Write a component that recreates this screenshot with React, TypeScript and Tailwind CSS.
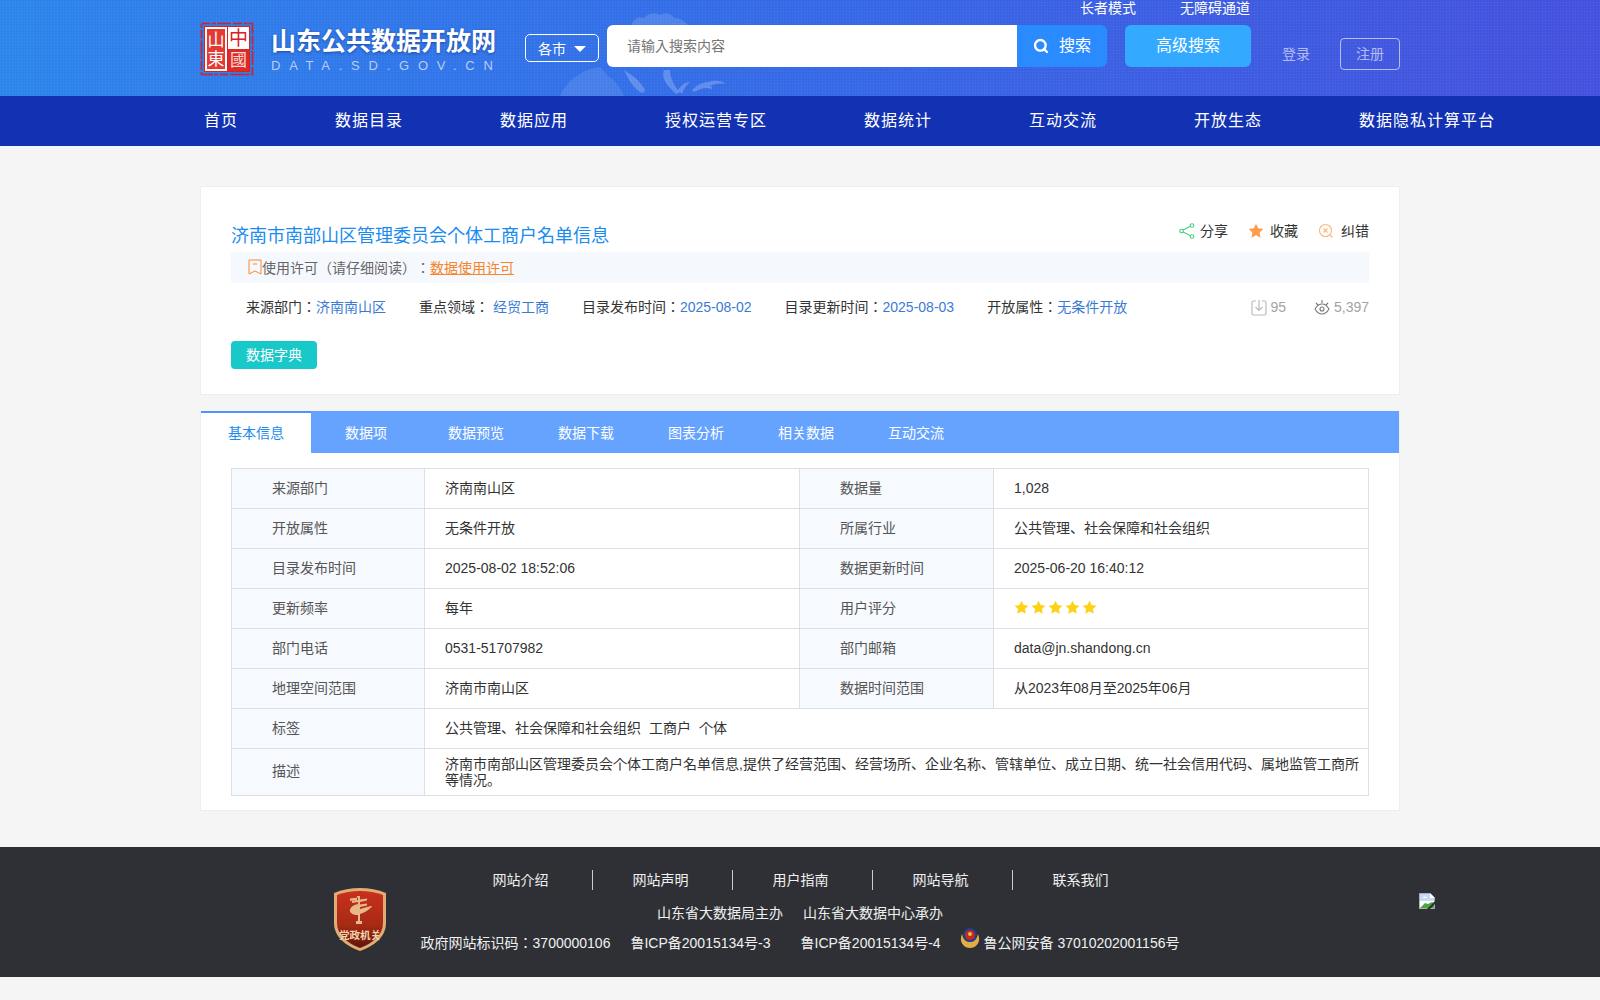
import { Search } from "lucide-react";

const FONT = `"Liberation Sans", "Noto Sans CJK JP", sans-serif`;

const navItems = ["首页", "数据目录", "数据应用", "授权运营专区", "数据统计", "互动交流", "开放生态", "数据隐私计算平台"];
const tabs = ["基本信息", "数据项", "数据预览", "数据下载", "图表分析", "相关数据", "互动交流"];
const footerLinks = ["网站介绍", "网站声明", "用户指南", "网站导航", "联系我们"];

function Seal() {
  return (
    <svg width="54" height="56" viewBox="0 0 54 56" className="shrink-0">
      <rect x="1.500" y="2.500" width="51" height="51" fill="none" stroke="#d8201f" strokeWidth="1.600" strokeDasharray="9 1.500 4 1 14 2" />
      <rect x="4" y="5" width="46" height="46" fill="#d8201f" />
      <rect x="5" y="6" width="22" height="44" fill="#fff" />
      <rect x="7" y="8" width="18" height="40" fill="#e33a34" />
      <rect x="28" y="6" width="21" height="22" fill="#fff" />
      <rect x="28" y="28" width="21" height="22" fill="#dd2a26" />
      <text x="16" y="25" textAnchor="middle" fontSize="17" fill="#fff" fontFamily={FONT}>山</text>
      <text x="16" y="44" textAnchor="middle" fontSize="17" fill="#fff" fontFamily={FONT}>東</text>
      <text x="38.500" y="24" textAnchor="middle" fontSize="19" fill="#d8201f" fontFamily={FONT}>中</text>
      <text x="38.500" y="45" textAnchor="middle" fontSize="17" fill="#f8dcd6" fontFamily={FONT}>國</text>
    </svg>
  );
}

function Clouds() {
  // faint map texture behind the search box
  return (
    <svg width="200" height="96" viewBox="0 0 200 96" className="absolute left-[560px] top-0" fill="#ffffff">
      <path opacity="0.14" d="M72 24c2-6 8-8 12-6 4-5 12-6 16-3 5-3 12-1 14 3 6 0 12 3 14 8l-6 2h-50z" />
      <path opacity="0.1" d="M0 96c4-10 12-18 20-22 6-4 12-6 20-7l8 9c6 4 12 10 16 20z" />
      <path opacity="0.22" d="M64 70l6 4c6 4 10 8 14 14 2 3 0 6-4 4-6-4-10-10-12-14zM104 70c-2 6 0 12 6 18l6 6 4-2c-6-6-10-14-10-22zM118 90c4-6 8-8 12-8-3 2-6 6-8 12zM132 90c6-6 12-8 16-8 6-2 14-2 18 2-6-1-12 0-16 2 4 2 2 4-2 2-6 0-10 2-14 4z" />
    </svg>
  );
}

function Badge() {
  return (
    <svg width="52" height="63" viewBox="0 0 52 63" className="shrink-0">
      <defs>
        <linearGradient id="shield" x1="0" y1="0" x2="0" y2="1">
          <stop offset="0" stopColor="#c9301d" />
          <stop offset="0.6" stopColor="#a72a15" />
          <stop offset="1" stopColor="#5e140c" />
        </linearGradient>
      </defs>
      <path d="M26 0c9 0 18 1.500 26 5v30c0 14-12 23-26 28C12 58 0 49 0 35V5C8 1.500 17 0 26 0z" fill="#e0ac74" />
      <path d="M26 3c8 0 16 1.500 23 4v28c0 12-10 20-23 25C13 55 3 47 3 35V7c7-2.500 15-4 23-4z" fill="url(#shield)" />
      <path d="M16 13l7-1V8h3v3.500l7-1v2l-7 1.500v2.500l7-1v2l-7 1.500v2l11-3c1.500 0 1 1-.5 2-3 3-7 5-10.500 6v7h2v3H22v-3h2v-6c-5 0-9-2-8-5.500 1-3 4-4.500 8-5.500v-2l-6 1v-2l6-1v-2.500l-8 1z" fill="#e8b888" />
      <text x="26" y="51" textAnchor="middle" fontSize="10.500" fontWeight="700" fill="#f3d3ab" fontFamily={FONT}>党政机关</text>
    </svg>
  );
}

function PoliceEmblem() {
  return (
    <svg width="20" height="22" viewBox="0 0 20 22" className="shrink-0">
      <path d="M2 7c-3 6 0 14 8 14s11-8 8-14c-1 4-3 8-8 8S3 11 2 7z" fill="#e0ae45" />
      <circle cx="10" cy="8" r="7" fill="#1d3f94" />
      <circle cx="10" cy="8" r="5" fill="#c8281e" />
      <circle cx="10" cy="7" r="2" fill="#e8bb3f" />
    </svg>
  );
}

function BrokenImage() {
  return (
    <svg width="16" height="16" viewBox="0 0 16 16" className="shrink-0">
      <path d="M0.500 0.500h11l4 4v11H0.500z" fill="#fff" stroke="#a9b1b8" />
      <path d="M1 1h10v4h4v3H1z" fill="#c6d8f4" />
      <path d="M3 5c2-2 4-2 5 0z" fill="#fff" />
      <path d="M1 15l5-5 3 1 4-2 2 1v5z" fill="#4ea53a" />
      <path d="M8 16l8-8v3l-5 5z" fill="#2e3035" />
    </svg>
  );
}

function Star({ color, size }: { color: string; size: number }) {
  return (
    <svg width={size} height={size} viewBox="0 0 24 24" className="shrink-0">
      <path d="M12 1l3.400 7 7.600 1-5.500 5.300 1.400 7.700L12 18.300 5.100 22l1.400-7.700L1 9l7.600-1z" fill={color} />
    </svg>
  );
}

function Meta({ label, value }: { label: string; value: string }) {
  return (
    <span className="whitespace-nowrap text-[#333]">
      {label}
      <span className="text-[#3b7bd6]">{value}</span>
    </span>
  );
}

const rows: [string, string, string, React.ReactNode][] = [
  ["来源部门", "济南南山区", "数据量", "1,028"],
  ["开放属性", "无条件开放", "所属行业", "公共管理、社会保障和社会组织"],
  ["目录发布时间", "2025-08-02 18:52:06", "数据更新时间", "2025-06-20 16:40:12"],
  [
    "更新频率",
    "每年",
    "用户评分",
    <span className="flex gap-[2px]" key="stars">
      {[0, 1, 2, 3, 4].map((i) => (
        <Star key={i} color="#ffd21a" size={15} />
      ))}
    </span>,
  ],
  ["部门电话", "0531-51707982", "部门邮箱", "data@jn.shandong.cn"],
  ["地理空间范围", "济南市南山区", "数据时间范围", "从2023年08月至2025年06月"],
];

const labelCell = "border border-[#dcdfe6] bg-[#f6f9fe] pb-[2px] pl-[40px] text-[#555] font-normal text-left";
const valueCell = "border border-[#dcdfe6] pb-[2px] pl-[20px] pr-2 text-[#333] text-left";

export default function App() {
  return (
    <div className="min-h-[1000px] bg-[#f5f5f5] text-sm [text-spacing-trim:space-all]" style={{ fontFamily: FONT }}>
      <header className="relative h-[96px] overflow-hidden bg-[linear-gradient(90deg,#2b84ec_0%,#3468e6_50%,#4350dd_100%)]">
        <div className="absolute inset-0 bg-[repeating-linear-gradient(0deg,rgba(255,255,255,0.03)_0_1px,transparent_1px_3px),repeating-linear-gradient(90deg,rgba(255,255,255,0.03)_0_1px,transparent_1px_3px)]" />
        <Clouds />
        <div className="relative mx-auto flex h-full w-[1200px] items-start">
          <div className="mt-[21px]">
            <Seal />
          </div>
          <div className="ml-[17px] mt-[25px] w-[236px]">
            <div className="whitespace-nowrap text-[25px] font-bold leading-[32px] text-white [text-shadow:0_1px_3px_rgba(0,0,50,0.4)]">山东公共数据开放网</div>
            <div className="mt-[1px] whitespace-nowrap text-[13px] leading-[16px] tracking-[8.750px] text-[#b6cdf6]">DATA.SD.GOV.CN</div>
          </div>
          <button className="ml-[18px] mt-[34px] flex h-[28px] w-[74px] items-center justify-center gap-[8px] rounded-[5px] border border-white pt-[2px] text-sm text-white">
            各市
            <span className="h-0 w-0 border-x-[6px] border-t-[6px] border-x-transparent border-t-white" />
          </button>
          <div className="ml-[8px] mt-[25px] flex h-[42px] w-[410px] items-center rounded-l-[6px] bg-white pl-[20px] text-sm text-[#757575]">请输入搜索内容</div>
          <button className="mt-[25px] flex h-[42px] w-[90px] items-center justify-center gap-[10px] rounded-r-[6px] bg-[#2a8bff] text-base text-white">
            <Search size={16} strokeWidth={3.5} />
            搜索
          </button>
          <button className="ml-[18px] mt-[25px] h-[42px] w-[126px] rounded-[6px] bg-[#33aaff] text-base text-white">高级搜索</button>
          <span className="ml-[31px] mt-[46px] whitespace-nowrap leading-[16px] text-white/60">登录</span>
          <button className="ml-[30px] mt-[38px] h-[32px] w-[60px] shrink-0 rounded-[4px] border border-white/60 text-white/60">注册</button>
        </div>
        <div className="absolute left-[1080px] top-0 flex gap-[44px] leading-[16px] text-white">
          <span>长者模式</span>
          <span>无障碍通道</span>
        </div>
      </header>

      <nav className="h-[50px] bg-[#1232b3]">
        <ul className="mx-auto flex h-full w-[1200px] items-center gap-[97px] pl-[4px] text-base tracking-[1px] text-white">
          {navItems.map((item) => (
            <li className="whitespace-nowrap" key={item}>
              {item}
            </li>
          ))}
        </ul>
      </nav>

      <main className="mx-auto w-[1200px] pt-[40px]">
        <section className="h-[209px] border border-[#eeeeee] bg-white px-[30px]">
          <div className="flex h-[65px] items-start justify-between">
            <h1 className="mt-[36px] text-lg font-normal leading-[26px] text-[#1a8cf0]">济南市南部山区管理委员会个体工商户名单信息</h1>
            <div className="mt-[34px] flex items-center text-[#333]">
              <span className="flex items-center gap-[5px]">
                <svg width="16" height="16" viewBox="0 0 16 16" fill="none" stroke="#44cf82" strokeWidth="1.100">
                  <circle cx="2.500" cy="8" r="1.800" />
                  <circle cx="13" cy="2.500" r="1.800" />
                  <circle cx="13" cy="13.500" r="1.800" />
                  <path d="M4 7l7.500-3.800M4 9l7.500 3.800" />
                </svg>
                分享
              </span>
              <span className="ml-[20px] flex items-center gap-[6px]">
                <Star color="#ff9d4d" size={16} />
                收藏
              </span>
              <span className="ml-[20px] flex items-center gap-[7px]">
                <svg width="16" height="16" viewBox="0 0 16 16" fill="none" stroke="#fbb77c" strokeWidth="1.100">
                  <circle cx="7.500" cy="7.500" r="6" />
                  <path d="M5.500 5.500l4 4M9.500 5.500l-4 4M12 12l2.500 2.500" />
                </svg>
                纠错
              </span>
            </div>
          </div>
          <div className="flex h-[31px] items-center bg-[#f5f9fe] pl-[17px] text-[#666]">
            <svg width="14" height="16" viewBox="0 0 14 16" fill="none" stroke="#f7892e" strokeWidth="1" className="mb-[2px]">
              <path d="M1 1h12v14l-6-3-6 3zM5 5h4" />
            </svg>
            <span>使用许可（请仔细阅读）：</span>
            <a className="text-[#f7862a] underline" href="#">数据使用许可</a>
          </div>
          <div className="flex h-[48px] items-center gap-[33px] pl-[15px]">
            <Meta label="来源部门：" value="济南南山区" />
            <Meta label="重点领域： " value="经贸工商" />
            <Meta label="目录发布时间：" value="2025-08-02" />
            <Meta label="目录更新时间：" value="2025-08-03" />
            <Meta label="开放属性：" value="无条件开放" />
            <div className="ml-auto flex items-center text-[#a3a3a3]">
              <svg width="16" height="17" viewBox="0 0 16 17" fill="none" stroke="#bbbbbb" strokeWidth="1.200" className="mr-[3px]">
                <path d="M5 2H2.500A1.500 1.500 0 0 0 1 3.500v11A1.500 1.500 0 0 0 2.500 16h11a1.500 1.500 0 0 0 1.500-1.500v-11A1.500 1.500 0 0 0 13.500 2H11M8 1v10M4.500 8L8 11.500 11.500 8" />
              </svg>
              95
              <svg width="16" height="15" viewBox="0 0 16 15" fill="none" stroke="#777777" strokeWidth="1.100" className="ml-[28px] mr-[4px]">
                <path d="M1 9c2-3.500 4-5 7-5s5 1.500 7 5c-2 3.500-4 5-7 5s-5-1.500-7-5z" />
                <circle cx="8" cy="9" r="2" />
                <path d="M2 3l2 2M14 3l-2 2M8 0v3" />
              </svg>
              5,397
            </div>
          </div>
          <button className="mt-[10px] h-[28px] w-[86px] rounded-[4px] bg-[#19c9ca] text-white">数据字典</button>
        </section>

        <section className="mt-[16px] border-x border-b border-[#eeeeee] bg-white">
          <div className="flex h-[42px] bg-[#66a3ff]">
            {tabs.map((tab, i) => (
              <div
                className={
                  i === 0
                    ? "flex w-[110px] items-center justify-center border-t-[2px] border-[#4d94ff] bg-white text-[#1a8cf0]"
                    : "flex w-[110px] items-center justify-center pt-[2px] text-white"
                }
                key={tab}
              >
                {tab}
              </div>
            ))}
          </div>
          <div className="h-[357px] px-[30px] pt-[15px]">
            <table className="w-[1137px] table-fixed border-collapse text-sm">
              <colgroup>
                <col className="w-[193px]" />
                <col className="w-[375px]" />
                <col className="w-[194px]" />
                <col className="w-[375px]" />
              </colgroup>
              <tbody>
                {rows.map(([a, b, c, d]) => (
                  <tr className="h-[40px]" key={a}>
                    <th className={labelCell}>{a}</th>
                    <td className={valueCell}>{b}</td>
                    <th className={labelCell}>{c}</th>
                    <td className={valueCell}>{d}</td>
                  </tr>
                ))}
                <tr className="h-[40px]">
                  <th className={labelCell}>标签</th>
                  <td className={valueCell} colSpan={3}>
                    <span className="flex gap-[8px]">
                      <span>公共管理、社会保障和社会组织</span>
                      <span>工商户</span>
                      <span>个体</span>
                    </span>
                  </td>
                </tr>
                <tr className="h-[47px]">
                  <th className={labelCell}>描述</th>
                  <td className="border border-[#dcdfe6] pl-[20px] pr-[8px] text-left leading-[16px] text-[#333]" colSpan={3}>
                    济南市南部山区管理委员会个体工商户名单信息,提供了经营范围、经营场所、企业名称、管辖单位、成立日期、统一社会信用代码、属地监管工商所等情况。
                  </td>
                </tr>
              </tbody>
            </table>
          </div>
        </section>
      </main>

      <footer className="mt-[36px] grid h-[130px] grid-cols-[1fr_758px_1fr] bg-[#2e3035] text-[#f0f0f0]">
        <div className="flex justify-end pr-[35px] pt-[41px]">
          <Badge />
        </div>
        <div className="flex flex-col items-center pt-[25px]">
          <div className="ml-[4px] flex h-[16px] items-center whitespace-nowrap">
            {footerLinks.map((link, i) => (
              <span className={i === 0 ? "pl-[40px] pr-[43px]" : "border-l border-[#cccccc] pl-[40px] pr-[43px]"} key={link}>
                {link}
              </span>
            ))}
          </div>
          <div className="mt-[17px] flex gap-[20px] leading-[16px]">
            <span>山东省大数据局主办</span>
            <span>山东省大数据中心承办</span>
          </div>
          <div className="mt-[14px] flex h-[16px] items-center whitespace-nowrap leading-[16px]">
            <span>政府网站标识码：3700000106</span>
            <span className="ml-[20px]">鲁ICP备20015134号-3</span>
            <span className="ml-[30px]">鲁ICP备20015134号-4</span>
            <span className="-mt-[10px] ml-[19px] mr-[4px] h-[22px]">
              <PoliceEmblem />
            </span>
            <span>鲁公网安备 37010202001156号</span>
          </div>
        </div>
        <div className="pl-[240px] pt-[46px]">
          <BrokenImage />
        </div>
      </footer>
    </div>
  );
}
